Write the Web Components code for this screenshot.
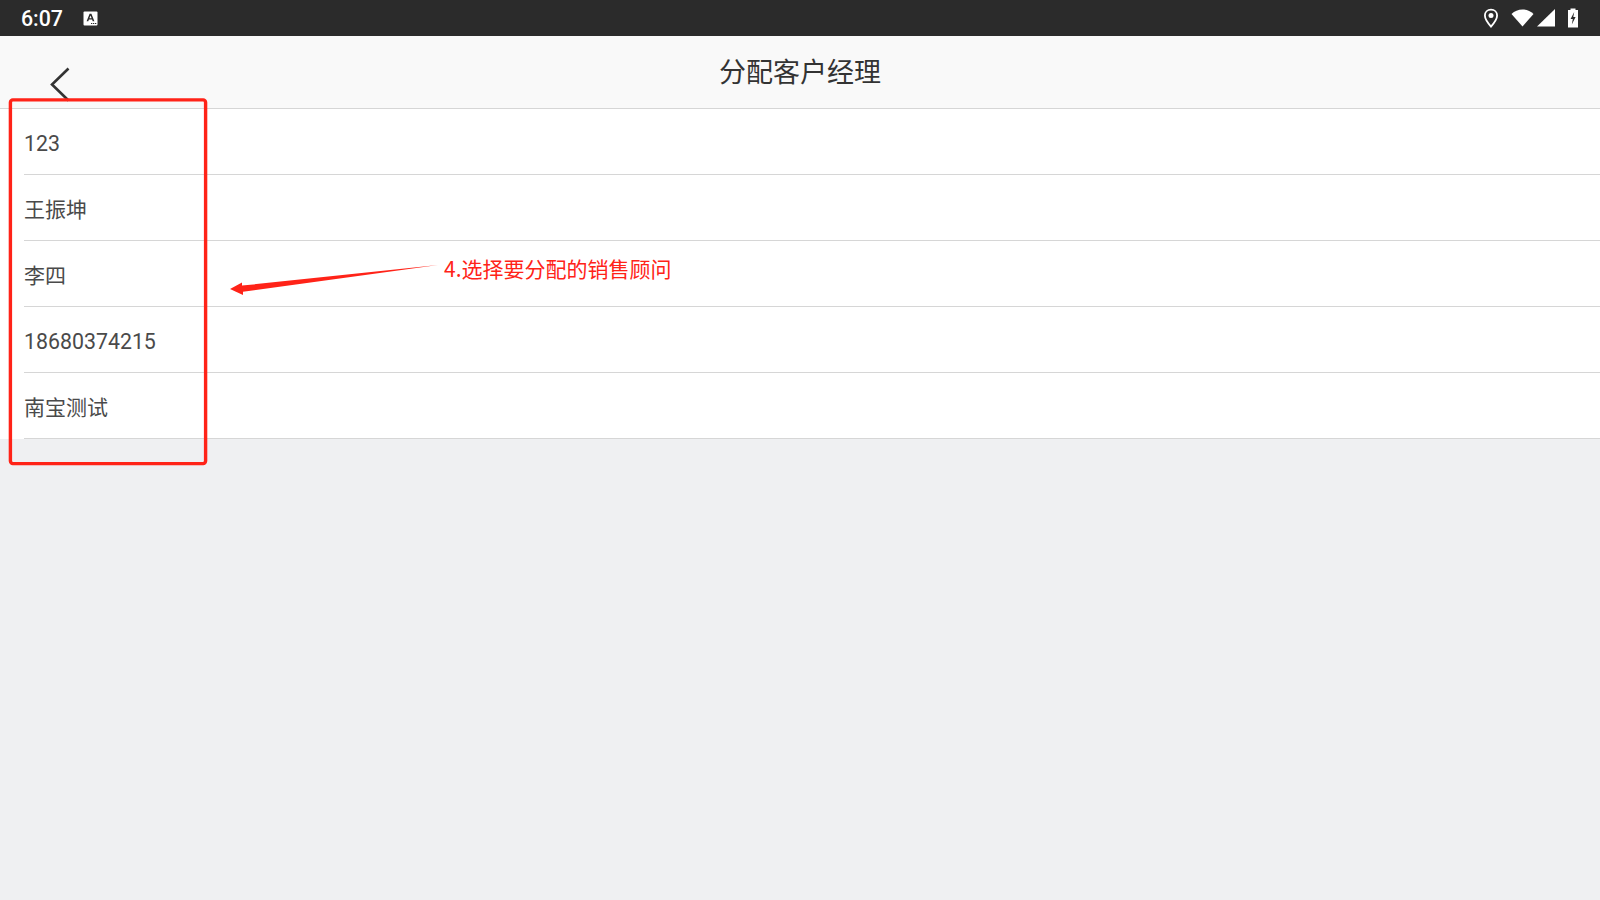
<!DOCTYPE html>
<html lang="zh">
<head>
<meta charset="utf-8">
<title>分配客户经理</title>
<style>
  html, body { margin: 0; height: 100%; }
  body {
    width: 1600px;
    height: 900px;
    overflow: hidden;
    background: #eff0f2;
    font-family: Roboto, "Noto Sans CJK SC", sans-serif;
  }
</style>
</head>
<body>
<app-screen>
  <status-bar time="6:07"></status-bar>
  <nav-header title="分配客户经理"></nav-header>
  <manager-list>
    <manager-row digits>123</manager-row>
    <manager-row>王振坤</manager-row>
    <manager-row>李四</manager-row>
    <manager-row digits>18680374215</manager-row>
    <manager-row>南宝测试</manager-row>
  </manager-list>
  <guide-note>4.选择要分配的销售顾问</guide-note>
</app-screen>

<script>
customElements.define(
  'app-screen',
  class AppScreen extends HTMLElement {
    constructor() {
      super()
      this.attachShadow({ mode: 'open' })
      this.shadowRoot.innerHTML = `
        <style>
          :host {
            display: flex;
            flex-direction: column;
            position: relative;
            width: 1600px;
            height: 900px;
          }
        </style>
        <slot></slot>
      `
    }
  }
)

customElements.define(
  'status-bar',
  class StatusBar extends HTMLElement {
    constructor() {
      super()
      this.attachShadow({ mode: 'open' })
      this.shadowRoot.innerHTML = `
        <style>
          :host {
            display: flex;
            align-items: center;
            box-sizing: border-box;
            height: 36px;
            padding: 0 0 0 21px;
            background: #2b2b2b;
            color: #fff;
          }
          .time {
            font: 500 21.33px/36px Roboto, sans-serif;
            width: 62px;
            padding-top: 1px;
          }
          .right {
            margin-left: auto;
            display: flex;
            align-items: center;
          }
          svg { display: block; }
        </style>
        <span class="time">${this.getAttribute('time')}</span>
        <svg width="15" height="15" viewBox="0 0 15 15">
          <rect x="0.5" y="0.5" width="14" height="14" rx="1" fill="#fff"/>
          <path d="M3.6 10.2 L6.6 2.8 H8.4 L11.4 10.2 H9.7 L9.1 8.6 H5.9 L5.3 10.2 Z M6.4 7.2 H8.6 L7.5 4.4 Z" fill="#2b2b2b" fill-rule="evenodd"/>
          <path d="M8 12h1.3v1H8zM10 12h1.3v1H10zM12 12h1.3v1H12z" fill="#2b2b2b"/>
        </svg>
        <div class="right">
          <svg width="16" height="20" viewBox="0 0 16 20" style="margin-right:12px">
            <path d="M8 1.6 C4.4 1.6 1.9 4.2 1.9 7.5 C1.9 11.6 8 18.6 8 18.6 C8 18.6 14.1 11.6 14.1 7.5 C14.1 4.2 11.6 1.6 8 1.6 Z" fill="none" stroke="#fff" stroke-width="1.8"/>
            <circle cx="8" cy="7.4" r="2.5" fill="#fff"/>
          </svg>
          <svg width="23" height="18" viewBox="0 0 23 18" style="margin-right:3px">
            <path d="M0.5 5 C3.5 2.2 7.2 0.5 11.5 0.5 C15.8 0.5 19.5 2.2 22.5 5 L11.5 17.5 Z" fill="#fff"/>
          </svg>
          <svg width="18" height="18" viewBox="0 0 18 18" style="margin-right:12px">
            <path d="M0 17.5 L18 0 V17.5 Z" fill="#fff"/>
          </svg>
          <svg width="12" height="20" viewBox="0 0 12 20" style="margin-right:21px">
            <path d="M3.5 0.5 H8.5 V2 H11 V19.5 H1 V2 H3.5 Z" fill="#fff"/>
            <path d="M7.2 4 L3.6 11 H5.8 L4.8 16.5 L8.6 9 H6.3 Z" fill="#2b2b2b"/>
          </svg>
        </div>
      `
    }
  }
)

customElements.define(
  'nav-header',
  class NavHeader extends HTMLElement {
    constructor() {
      super()
      this.attachShadow({ mode: 'open' })
      this.shadowRoot.innerHTML = `
        <style>
          :host {
            display: block;
            position: relative;
            box-sizing: border-box;
            height: 73px;
            background: #f9f9f9;
            border-bottom: 1px solid #d6d6d6;
            text-align: center;
          }
          .title {
            font: 400 27px/70px "Noto Sans CJK SC", sans-serif;
            color: #333;
          }
          .back {
            position: absolute;
            left: 49px;
            top: 31px;
          }
        </style>
        <svg class="back" width="24" height="36" viewBox="0 0 24 36">
          <path d="M19.5 1.5 L3 17.5 L19.5 33.5" fill="none" stroke="#333" stroke-width="2.6"/>
        </svg>
        <span class="title">${this.getAttribute('title')}</span>
      `
    }
  }
)

customElements.define(
  'manager-list',
  class ManagerList extends HTMLElement {
    constructor() {
      super()
      this.attachShadow({ mode: 'open' })
      this.shadowRoot.innerHTML = `
        <style>
          :host {
            display: block;
            background: #fff;
            padding-left: 24px;
          }
        </style>
        <slot></slot>
      `
    }
  }
)

customElements.define(
  'manager-row',
  class ManagerRow extends HTMLElement {
    constructor() {
      super()
      this.attachShadow({ mode: 'open' })
      this.shadowRoot.innerHTML = `
        <style>
          :host {
            display: flex;
            align-items: center;
            box-sizing: border-box;
            height: 66px;
            padding-top: 5px;
            border-bottom: 1px solid #d6d6d6;
            font: 400 21px/1 Roboto, "Noto Sans CJK SC", sans-serif;
            color: #4a4a4a;
          }
          :host([digits]) {
            font-size: 21.33px;
          }
        </style>
        <slot></slot>
      `
    }
  }
)

// red markup drawn over the screenshot: box, arrow and its label
customElements.define(
  'guide-note',
  class GuideNote extends HTMLElement {
    constructor() {
      super()
      this.attachShadow({ mode: 'open' })
      this.shadowRoot.innerHTML = `
        <style>
          :host {
            position: absolute;
            inset: 0;
            display: block;
            pointer-events: none;
          }
          .markup {
            position: absolute;
            left: 0;
            top: 0;
          }
          .label {
            position: absolute;
            left: 444px;
            top: 253px;
            font: 400 21px/30px "Noto Sans CJK SC", sans-serif;
            color: #ff2318;
            white-space: nowrap;
          }
        </style>
        <svg class="markup" width="700" height="480" viewBox="0 0 700 480">
          <rect x="10.4" y="99.9" width="195.2" height="363.7" rx="2.5" fill="none" stroke="#ff2318" stroke-width="3.4"/>
          <path d="M230 289 L242 282.5 L242 285.6 L438 265 L243 291.8 L243 295 Z" fill="#ff2318"/>
        </svg>
        <span class="label"><slot></slot></span>
      `
    }
  }
)
</script>
</body>
</html>
